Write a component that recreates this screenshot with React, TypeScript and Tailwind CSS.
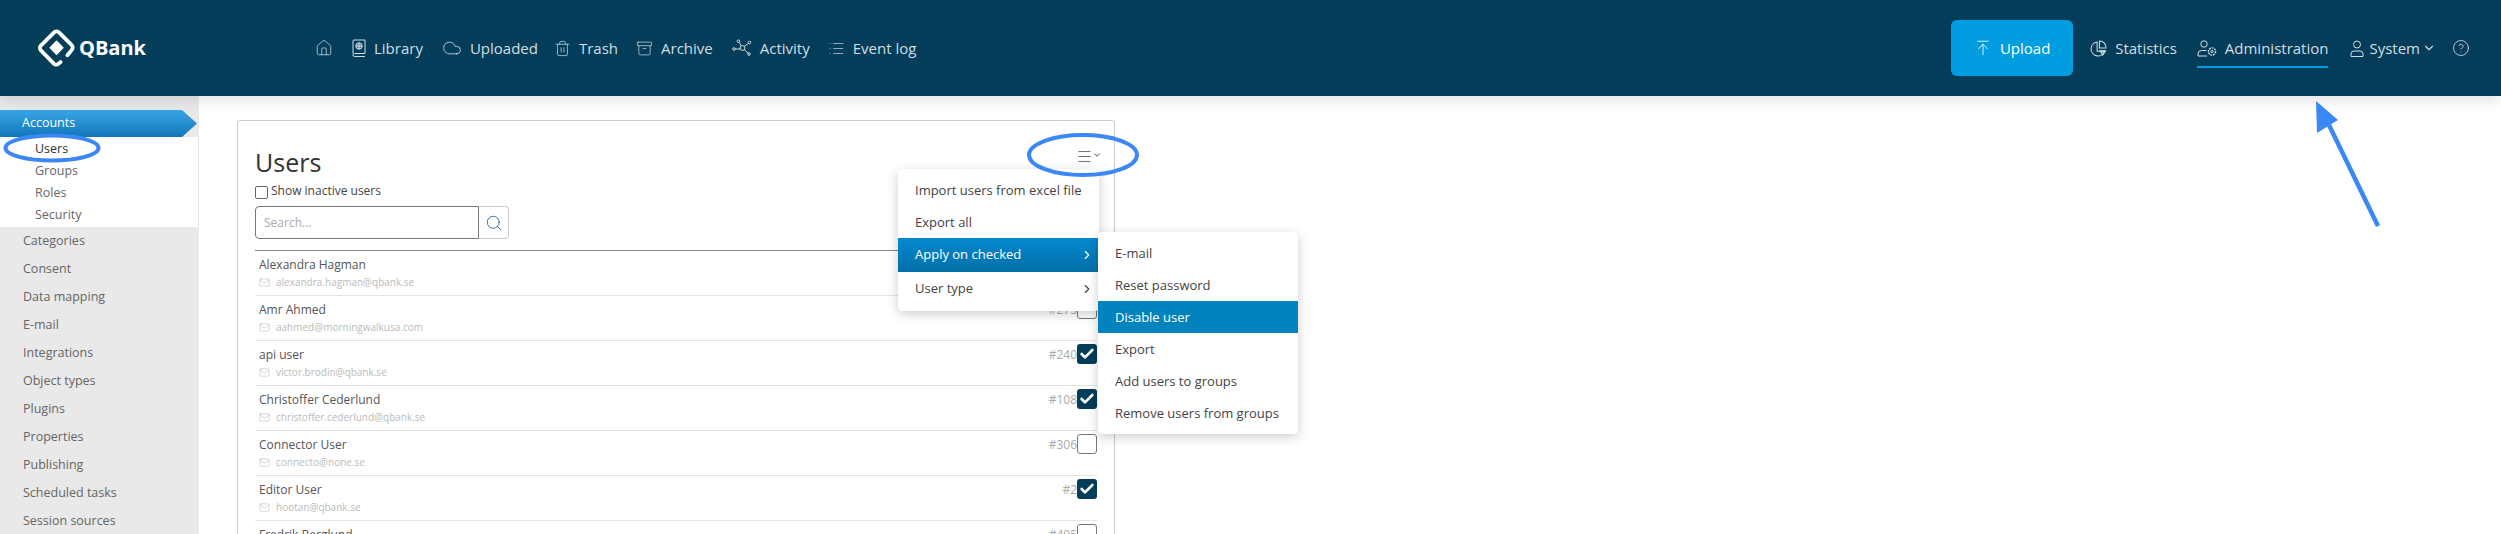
import { ArrowUpToLine, Check, ChevronDown, ChevronRight, CircleHelp, Cloud, House, Mail, Menu, Search, Trash2, Archive, List } from "lucide-react";

const navIconClass = "w-[17px] h-[17px] text-[#d3dde2]";

const LibraryIcon = () => (
    <svg viewBox="0 0 14 18" className="w-[14px] h-[18px] text-[#d3dde2]" fill="none" stroke="currentColor" strokeWidth="1">
        <path d="M1 14.5V2a1 1 0 0 1 1-1h11v13.5H2.5a1.5 1.5 0 0 0 0 3H13" />
        <circle cx="7" cy="7" r="3.2" fill="currentColor" fillOpacity="0.35" />
        <path d="M3.8 7h6.4M7 3.8v6.4" />
    </svg>
);

const ActivityIcon = () => (
    <svg viewBox="0 0 20 18" className="w-5 h-[18px] text-[#d3dde2]" fill="none" stroke="currentColor" strokeWidth="1">
        <circle cx="10.5" cy="9" r="2.4" />
        <circle cx="2" cy="10" r="1.3" />
        <circle cx="6.5" cy="2.2" r="1.3" />
        <circle cx="17.5" cy="3.5" r="1.3" />
        <circle cx="17" cy="15" r="1.3" />
        <path d="M3.3 10h4.8M7.2 3.4l2 3.5M16.4 4.4l-4 3M15.9 14l-3.7-3.4" />
    </svg>
);

const StatisticsIcon = () => (
    <svg viewBox="0 0 18 18" className="w-[17px] h-[17px] text-[#d3dde2]" fill="none" stroke="currentColor" strokeWidth="1.1">
        <path d="M7.5 2.2a7.4 7.4 0 1 0 8 9.8H7.5z" />
        <path d="M10 1a7 7 0 0 1 7 7.5h-7z" />
        <path d="M10.5 11.5h6l-3 4.5z" fill="currentColor" fillOpacity="0.5" />
    </svg>
);

const AdminIcon = () => (
    <svg viewBox="0 0 20 17" className="w-5 h-[17px] text-[#d3dde2]" fill="none" stroke="currentColor" strokeWidth="1">
        <circle cx="7" cy="4" r="3.2" />
        <path d="M1 16v-2a3.5 3.5 0 0 1 3.5-3.5h5M1 16h9" />
        <circle cx="15" cy="11.5" r="3.6" strokeDasharray="1.8 0.9" strokeWidth="1.4" />
        <circle cx="15" cy="11.5" r="1.2" />
    </svg>
);

const UserIcon = () => (
    <svg viewBox="0 0 14 17" className="w-[14px] h-[17px] text-[#d3dde2]" fill="none" stroke="currentColor" strokeWidth="1">
        <circle cx="7" cy="4.5" r="3.5" />
        <path d="M1 16.5v-2.5a3 3 0 0 1 3-3h6a3 3 0 0 1 3 3v2.5z" />
    </svg>
);

const Logo = () => (
    <svg viewBox="0 0 42 42" className="w-[38px] h-[42px]" fill="none">
        <path d="M25.5 36.5 L23 38.5 a3.5 3.5 0 0 1 -4.8 0 L4 24 a4 4 0 0 1 0 -6 L18 4 a4 4 0 0 1 6 0 L37.5 17.5 a4 4 0 0 1 0 6 L33 29" stroke="white" strokeWidth="4.2" strokeLinecap="round" transform="translate(-0.5 0)" />
        <path d="M20.5 13.5 L27.5 20.8 L20.5 28 L13.5 20.8 Z" fill="white" stroke="white" strokeWidth="1.5" strokeLinejoin="round" />
    </svg>
);

const navItems = [
    { label: "Library", margin: "ml-[19px]", icon: <LibraryIcon /> },
    { label: "Uploaded", margin: "ml-[19px]", icon: <Cloud className="w-5 h-5 text-[#d3dde2]" strokeWidth={1} /> },
    { label: "Trash", margin: "ml-[16px]", icon: <Trash2 className={navIconClass} strokeWidth={1} /> },
    { label: "Archive", margin: "ml-[18px]", icon: <Archive className={navIconClass} strokeWidth={1} /> },
    { label: "Activity", margin: "ml-[19px]", icon: <ActivityIcon /> },
    { label: "Event log", margin: "ml-[18px]", icon: <List className={navIconClass} strokeWidth={1} /> },
];

const sideItems = ["Categories", "Consent", "Data mapping", "E-mail", "Integrations", "Object types", "Plugins", "Properties", "Publishing", "Scheduled tasks", "Session sources"];

const users = [
    { name: "Alexandra Hagman", email: "alexandra.hagman@qbank.se", id: "", checked: false },
    { name: "Amr Ahmed", email: "aahmed@morningwalkusa.com", id: "#275", checked: false },
    { name: "api user", email: "victor.brodin@qbank.se", id: "#240", checked: true },
    { name: "Christoffer Cederlund", email: "christoffer.cederlund@qbank.se", id: "#108", checked: true },
    { name: "Connector User", email: "connecto@none.se", id: "#306", checked: false },
    { name: "Editor User", email: "hootan@qbank.se", id: "#2", checked: true },
    { name: "Fredrik Berglund", email: "fredrik@qbank.se", id: "#405", checked: false },
];

const subMenu = ["E-mail", "Reset password", "Disable user", "Export", "Add users to groups", "Remove users from groups"];

const Header = () => (
    <header className="relative z-10 h-24 shrink-0 bg-[#033d5a] flex items-center shadow-[0_4px_14px_rgba(0,0,0,0.12)] text-[15px] text-[#d3dde2]">
        <div className="flex items-center ml-[38px] w-[277px] shrink-0">
            <Logo />
            <span className="text-[20px] font-bold text-white ml-[3px]">QBank</span>
        </div>
        <nav className="flex items-center">
            <House className="w-[18px] h-[18px] text-[#d3dde2]" strokeWidth={1} />
            {navItems.map((item) => (
                <a key={item.label} className={`flex items-center gap-2 ${item.margin}`}>
                    {item.icon}
                    <span>{item.label}</span>
                </a>
            ))}
        </nav>
        <div className="ml-auto mr-[32px] flex items-center">
            <button className="w-[122px] h-14 rounded-md bg-[#009ee0] flex items-center justify-center gap-2 text-white text-[15px] mr-[17px]">
                <ArrowUpToLine className="w-[18px] h-[18px]" strokeWidth={1.1} />
                Upload
            </button>
            <a className="flex items-center gap-2 mr-[20px]">
                <StatisticsIcon />
                Statistics
            </a>
            <a className="relative flex items-center gap-2 mr-[22px]">
                <AdminIcon />
                Administration
                <span className="absolute left-0 right-0 -bottom-[9px] h-[2px] bg-[#009ee0]"></span>
            </a>
            <a className="flex items-center gap-[5px] mr-[16px]">
                <UserIcon />
                System
                <ChevronDown className="w-[14px] h-[14px] -ml-[3px]" strokeWidth={2} />
            </a>
            <CircleHelp className="w-[18px] h-[18px] -mr-[1px]" strokeWidth={1.1} />
        </div>
    </header>
);

const Sidebar = () => (
    <aside className="w-[199px] shrink-0 bg-[#e9e9e9] pt-[14px] text-[12.5px] text-[#666]">
        <div className="relative h-[27px] w-[197px] flex items-center pl-[22px] text-white bg-gradient-to-b from-[#38a6e6] to-[#0f76b8] [clip-path:polygon(0_0,182px_0,100%_50%,182px_100%,0_100%)]">
            Accounts
        </div>
        <div className="bg-white w-[198px] h-[90px] pl-[35px] pt-[1px] flex flex-col">
            <span className="h-[22px] flex items-center text-[#333]">Users</span>
            <span className="h-[22px] flex items-center">Groups</span>
            <span className="h-[22px] flex items-center">Roles</span>
            <span className="h-[22px] flex items-center">Security</span>
        </div>
        <ul className="pl-[23px]">
            {sideItems.map((item) => (
                <li key={item} className="h-[28px] flex items-center">{item}</li>
            ))}
        </ul>
    </aside>
);

const UserRow = ({ name, email, id, checked }: { name: string, email: string, id: string, checked: boolean }) => (
    <div className="h-[45px] shrink-0 border-b border-[#e4e4e4] flex pl-1 pt-[4px]">
        <div className="flex flex-col">
            <span className="text-[12px] leading-[20px] text-[#555]">{name}</span>
            <span className="flex items-center gap-[6px] text-[10px] leading-[14px] text-[#bbb]">
                <Mail className="w-[11px] h-[11px] text-[#aaa]" strokeWidth={1} />
                {email}
            </span>
        </div>
        <div className="ml-auto flex items-start -mt-[1px]">
            <span className="text-[12px] text-[#aaa] leading-[20px] mt-[1px]">{id}</span>
            {checked ? (
                <span className="w-5 h-5 rounded-[3px] bg-[#033d5a] flex items-center justify-center">
                    <Check className="w-4 h-4 text-white" strokeWidth={4} />
                </span>
            ) : (
                <span className="w-5 h-5 rounded-[3px] border border-[#777] bg-white"></span>
            )}
        </div>
    </div>
);

const Card = () => (
    <section className="relative w-[878px] h-[500px] shrink-0 border border-[#ccc] rounded-[3px] pl-[17px] pr-[17px] pt-[24px] bg-white text-[#444]">
        <div className="flex items-center justify-between h-[36px]">
            <h1 className="text-[25px] font-medium leading-[36px] text-[#333] pb-[3px]">Users</h1>
            <div className="flex items-center -mr-[5px] -mt-[14px] text-[#333]">
                <Menu className="w-[17px] h-[17px]" strokeWidth={1} />
                <ChevronDown className="w-[10px] h-[10px] -ml-[1px] -mt-[3px]" strokeWidth={2} />
            </div>
        </div>
        <label className="flex items-start h-[20px] mt-[3px] text-[12px] text-[#444]">
            <input type="checkbox" className="w-[13px] h-[13px] mt-[2px] mr-[3px] appearance-none border border-[#666] rounded-[2px] bg-white" />
            <span className="leading-[14px]">Show inactive users</span>
        </label>
        <div className="flex h-[33px] w-[254px] mt-[2px]">
            <input placeholder="Search..." className="w-[224px] h-full border border-[#777] rounded-l-[4px] px-2 text-[12px] placeholder:text-[#aaa] outline-none" />
            <button className="w-[30px] h-full border border-l-0 border-[#ccc] rounded-r-[4px] flex items-center justify-center">
                <Search className="w-[18px] h-[18px] text-[#1c5c7c]" strokeWidth={1.1} />
            </button>
        </div>
        <div className="mt-[11px] border-t border-[#888] flex flex-col">
            {users.map((user) => (
                <UserRow key={user.name} {...user} />
            ))}
        </div>
        {/* open dropdown */}
        <div className="absolute left-[660px] top-[48px] w-[201px] rounded-[4px] bg-white shadow-[0_3px_12px_rgba(0,0,0,0.2)] pb-[5px] text-[13px] text-[#444] z-10">
            <div className="h-[32px] mt-[5px] flex items-center pl-[17px] pt-[1px]">Import users from excel file</div>
            <div className="h-[32px] flex items-center pl-[17px] pt-[1px]">Export all</div>
            <div className="h-[34px] flex items-center justify-between pl-[17px] pr-[5px] text-white bg-gradient-to-b from-[#0489cf] to-[#046fa8]">
                Apply on checked
                <ChevronRight className="w-[14px] h-[14px]" strokeWidth={2} />
            </div>
            <div className="h-[34px] flex items-center justify-between pl-[17px] pr-[5px]">
                User type
                <ChevronRight className="w-[14px] h-[14px]" strokeWidth={2} />
            </div>
        </div>
        <div className="absolute left-[860px] top-[111px] w-[200px] rounded-[4px] bg-white shadow-[0_3px_12px_rgba(0,0,0,0.2)] py-[5px] text-[13px] text-[#444] z-20">
            {subMenu.map((item) => (
                <div key={item} className={`h-[32px] flex items-center pl-[17px] pt-[1px] ${item === "Disable user" ? "bg-[#0383bd] text-white" : ""}`}>
                    {item}
                </div>
            ))}
        </div>
    </section>
);

// blue hand-drawn annotations on top of the screenshot
const Annotations = () => (
    <svg className="absolute left-0 top-0 z-30 pointer-events-none" width="2501" height="534" fill="none" stroke="#3b87f6">
        <ellipse cx="52" cy="148" rx="46.5" ry="12.5" strokeWidth="4" />
        <ellipse cx="1083" cy="155" rx="54" ry="20" strokeWidth="4" />
        <path d="M2378 226 L2329 125" strokeWidth="4.5" />
        <path d="M2316 101 L2338 120 L2317 133 Z" fill="#3b87f6" stroke="none" />
    </svg>
);

const App = () => {
    return (
        <div className="relative w-[2501px] h-[534px] overflow-hidden bg-white flex flex-col font-['Open_Sans',sans-serif]">
            <Header />
            <div className="flex flex-1 min-h-0">
                <Sidebar />
                <main className="pl-[38px] pt-[24px]">
                    <Card />
                </main>
            </div>
            <Annotations />
        </div>
    );
};

export default App;
